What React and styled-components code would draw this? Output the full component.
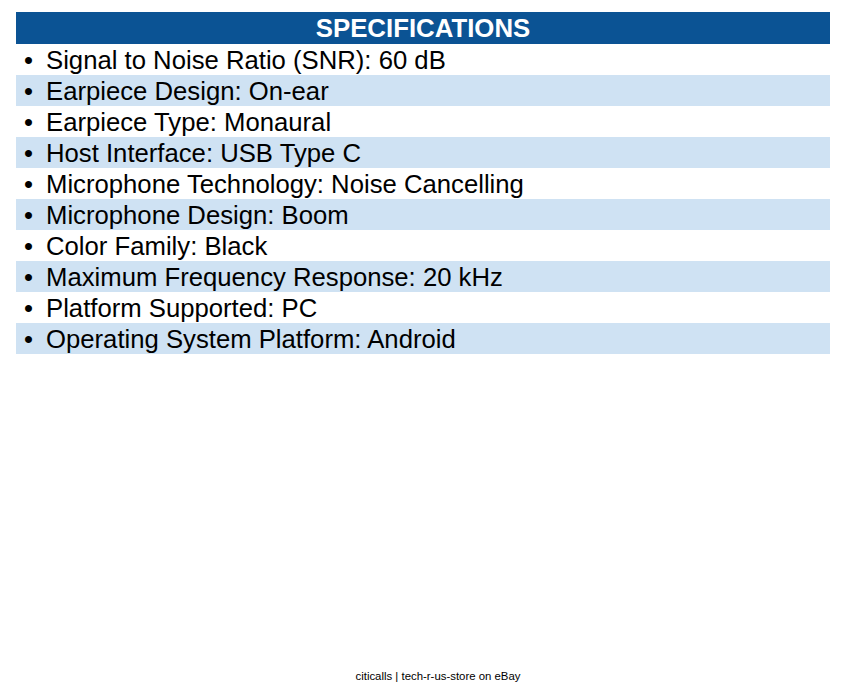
import React from 'react';
import styled, { createGlobalStyle } from 'styled-components';

const specs = [
  'Signal to Noise Ratio (SNR): 60 dB',
  'Earpiece Design: On-ear',
  'Earpiece Type: Monaural',
  'Host Interface: USB Type C',
  'Microphone Technology: Noise Cancelling',
  'Microphone Design: Boom',
  'Color Family: Black',
  'Maximum Frequency Response: 20 kHz',
  'Platform Supported: PC',
  'Operating System Platform: Android',
];

function App() {
  return (
    <>
      <GlobalStyle />
      <Page>
        <SpecTable>
          <SpecHeader>SPECIFICATIONS</SpecHeader>
          {specs.map((item, i) => (
            <SpecRow key={item} shaded={i % 2 === 1}>
              <Bullet>•</Bullet>
              {item}
            </SpecRow>
          ))}
        </SpecTable>
        <Footer>citicalls | tech-r-us-store on eBay</Footer>
      </Page>
    </>
  );
}

const GlobalStyle = createGlobalStyle`
  body {
    margin: 0;
    background: #ffffff;
    font-family: "Liberation Sans", Arial, sans-serif;
  }
`;

const Page = styled.div`
  height: 692px;
  display: flex;
  flex-direction: column;
  padding: 12px 14px 0 16px;
  box-sizing: border-box;
`;

const SpecTable = styled.div`
  display: flex;
  flex-direction: column;
  width: 814px;
`;

const SpecHeader = styled.div`
  height: 32px;
  background-color: #0b5394;
  color: #ffffff;
  font-size: 25.8px;
  font-weight: bold;
  line-height: 33px;
  text-align: center;
`;

const SpecRow = styled.div`
  display: flex;
  align-items: center;
  height: 31px;
  padding-left: 8px;
  background-color: ${(p) => (p.shaded ? '#cfe2f3' : 'transparent')};
  color: #000000;
  font-size: 25.7px;
  line-height: 32px;
`;

const Bullet = styled.span`
  width: 22px;
`;

const Footer = styled.div`
  margin-top: auto;
  padding: 0 0 10px 30px;
  text-align: center;
  font-size: 11.4px;
  color: #000000;
`;

export default App;
